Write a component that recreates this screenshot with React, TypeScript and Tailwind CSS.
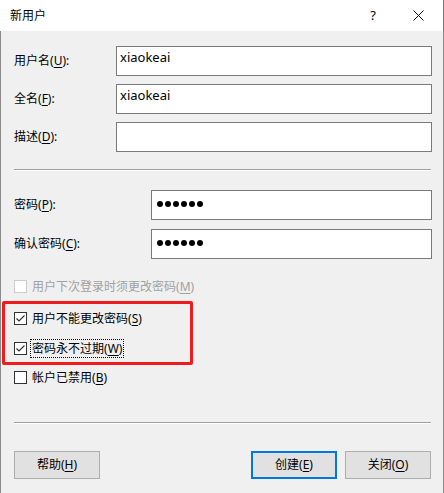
const font = "font-['Noto_Sans','Noto_Sans_CJK_SC',sans-serif]";

function Key({ k }: { k: string }) {
  return (
    <>
      (<span className="underline underline-offset-2">{k}</span>)
    </>
  );
}

function TextRow({
  label,
  k,
  labelW,
  value,
  dots,
  className = "",
}: {
  label: string;
  k: string;
  labelW: string;
  value?: string;
  dots?: boolean;
  className?: string;
}) {
  return (
    <div className={`flex h-[30px] items-center ${className}`}>
      <div className={`${labelW} shrink-0 text-[12px] text-black`}>
        {label}
        <Key k={k} />:
      </div>
      <div className="flex h-[30px] flex-1 items-start border border-[#7a7a7a] bg-white px-[3px] pt-[1px] text-[13px] text-black">
        {value}
        {dots && (
          <div className="mt-[9px] flex gap-[2px] pl-[2px]">
            {[0, 1, 2, 3, 4, 5].map((i) => (
              <span key={i} className="h-[6px] w-[6px] rounded-full bg-black" />
            ))}
          </div>
        )}
      </div>
    </div>
  );
}

function Check({
  checked,
  disabled,
  focus,
  label,
  k,
  className = "",
}: {
  checked?: boolean;
  disabled?: boolean;
  focus?: boolean;
  label: string;
  k: string;
  className?: string;
}) {
  return (
    <div className={`flex h-[20px] items-center gap-[3px] ${className}`}>
      <div
        className={`flex h-[13px] w-[13px] items-center justify-center border bg-white ${
          disabled ? "border-[#cccccc]" : "border-[#333333]"
        }`}
      >
        {checked && (
          <svg width="11" height="11" viewBox="0 0 11 11">
            <path d="M1.5 5.5 L4 8 L9.5 2.5" fill="none" stroke="#333" strokeWidth="1.2" />
          </svg>
        )}
      </div>
      <div
        className={`text-[12px] leading-[17px] ${
          disabled ? "text-[#a0a0a0]" : "text-black"
        } ${focus ? "border border-dotted border-black px-[1px]" : "border border-transparent px-[1px]"}`}
      >
        {label}
        <Key k={k} />
      </div>
    </div>
  );
}

function Sep({ className = "" }: { className?: string }) {
  return (
    <div className={`mr-[1px] ${className}`}>
      <div className="h-px bg-[#a0a0a0]" />
      <div className="h-px bg-white" />
    </div>
  );
}

function Btn({ label, k, primary }: { label: string; k: string; primary?: boolean }) {
  return (
    <div
      className={`flex h-[28px] w-[86px] items-center justify-center bg-[#e1e1e1] text-[12px] text-black ${
        primary ? "border-2 border-[#0078d7]" : "border border-[#adadad]"
      }`}
    >
      {label}
      <Key k={k} />
    </div>
  );
}

export default function App() {
  return (
    <div className={`relative h-[493px] w-[444px] overflow-hidden bg-white ${font}`}>
      {/* title bar */}
      <div className="flex h-[31px] items-center border-r border-[#777777] bg-white pl-[10px] text-[12px] text-black">
        <span>新用户</span>
        <span className="ml-auto mr-[37px] text-[13px]">?</span>
        <svg width="11" height="11" viewBox="0 0 11 11" className="mr-[19px]">
          <path d="M0.5 0.5 L10.5 10.5 M10.5 0.5 L0.5 10.5" stroke="#111" strokeWidth="1" />
        </svg>
      </div>

      {/* body */}
      <div className="flex h-[462px] flex-col border-x border-[#8a8a8a] bg-[#f0f0f0] pl-[13px] pr-[11px]">
        <TextRow className="mt-[15px]" label="用户名" k="U" labelW="w-[102px]" value="xiaokeai" />
        <TextRow className="mt-[8px]" label="全名" k="F" labelW="w-[102px]" value="xiaokeai" />
        <TextRow className="mt-[8px]" label="描述" k="D" labelW="w-[102px]" />

        <Sep className="mt-[17px]" />

        <TextRow className="mt-[19px]" label="密码" k="P" labelW="w-[137px]" dots />
        <TextRow className="mt-[9px]" label="确认密码" k="C" labelW="w-[137px]" dots />

        <Check className="mt-[17px]" disabled label="用户下次登录时须更改密码" k="M" />
        <Check className="mt-[12px]" checked label="用户不能更改密码" k="S" />
        <Check className="mt-[10px]" checked focus label="密码永不过期" k="W" />
        <Check className="mt-[9px]" label="帐户已禁用" k="B" />

        <Sep className="mt-[35px]" />

        <div className="mt-[27px] flex items-center">
          <Btn label="帮助" k="H" />
          <div className="ml-auto flex gap-[8px] pr-[1px]">
            <Btn label="创建" k="E" primary />
            <Btn label="关闭" k="O" />
          </div>
        </div>
      </div>

      {/* red annotation box */}
      <div className="pointer-events-none absolute left-[2px] top-[301px] h-[64px] w-[191px] rounded-[2px] border-[3px] border-[#ee1c1c]" />
    </div>
  );
}
